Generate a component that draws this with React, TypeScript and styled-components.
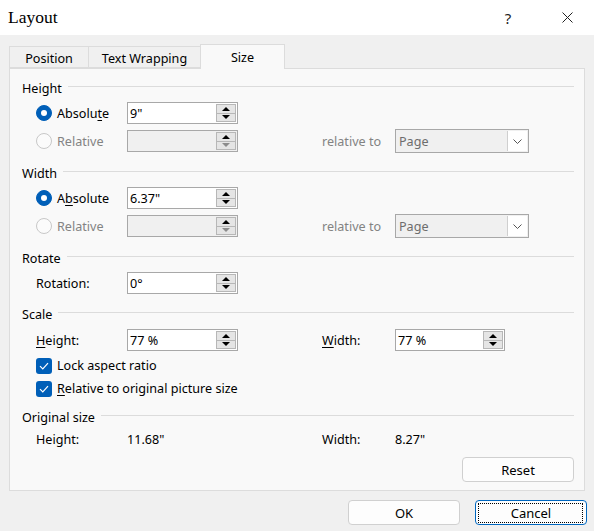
import React from "react";
import styled, { createGlobalStyle } from "styled-components";

const GlobalStyle = createGlobalStyle`
  html, body {
    margin: 0;
    padding: 0;
    background: #f0f0f0;
  }
  body {
    font-family: "Noto Sans", "Open Sans", sans-serif;
    font-size: 12.6px;
    color: #000;
  }
`;

const Window = styled.div`
  width: 594px;
  height: 531px;
  background: #f0f0f0;
  display: flex;
  flex-direction: column;
  overflow: hidden;
`;

const TitleBar = styled.div`
  height: 35px;
  flex-shrink: 0;
  background: #fff;
  display: flex;
  align-items: center;
  padding: 0 17px 0 8px;
`;

const Title = styled.div`
  flex: 1;
  font-family: "Liberation Serif", serif;
  font-size: 17.5px;
  color: #000;
`;

const TitleButton = styled.div`
  width: 20px;
  height: 20px;
  display: flex;
  align-items: center;
  justify-content: center;
  font-size: 15px;
  color: #222;
  & + & {
    margin-left: 39px;
  }
`;

const Body = styled.div`
  padding: 0 9px;
`;

const TabRow = styled.div`
  display: flex;
  align-items: flex-end;
  margin-top: 9px;
  height: 24px;
  position: relative;
  z-index: 1;
`;

const Tab = styled.div<{ $w: number; $active?: boolean }>`
  box-sizing: border-box;
  width: ${(p) => p.$w}px;
  height: ${(p) => (p.$active ? 25 : 22)}px;
  margin-bottom: ${(p) => (p.$active ? -1 : 0)}px;
  background: ${(p) => (p.$active ? "#f9f9f9" : "#f0f0f0")};
  border: 1px solid #dcdcdc;
  border-bottom: ${(p) => (p.$active ? "none" : "1px solid #dcdcdc")};
  & + & {
    margin-left: -1px;
  }
  display: flex;
  align-items: center;
  justify-content: center;
  padding-top: ${(p) => (p.$active ? 0 : 2)}px;
`;

const Panel = styled.div`
  box-sizing: border-box;
  height: 423px;
  background: #f9f9f9;
  border: 1px solid #dcdcdc;
  padding: 0 10px 0 12px;
  display: flex;
  flex-direction: column;
`;

const SectionHeader = styled.div<{ $mt: number }>`
  height: 18px;
  margin-top: ${(p) => p.$mt}px;
  display: flex;
  align-items: center;
  gap: 6px;
  &::after {
    content: "";
    flex: 1;
    height: 1px;
    margin-top: -3px;
    background: #dcdcdc;
  }
`;

const Row = styled.div<{ $mt: number; $h?: number }>`
  display: grid;
  grid-template-columns: 91px 195px 73px auto;
  align-items: center;
  height: ${(p) => p.$h ?? 24}px;
  margin-top: ${(p) => p.$mt}px;
  padding-left: 14px;
`;

const Label = styled.span<{ $disabled?: boolean }>`
  color: ${(p) => (p.$disabled ? "#838383" : "#000")};
  white-space: nowrap;
`;

const Key = styled.span`
  text-decoration: underline;
  text-underline-offset: 2px;
`;

const RadioWrap = styled.div`
  display: flex;
  align-items: center;
  gap: 5px;
`;

const RadioDot = styled.span<{ $checked?: boolean }>`
  box-sizing: border-box;
  width: 16px;
  height: 16px;
  border-radius: 50%;
  flex-shrink: 0;
  display: flex;
  align-items: center;
  justify-content: center;
  background: ${(p) => (p.$checked ? "#005fb8" : "#fbfbfb")};
  border: 1px solid ${(p) => (p.$checked ? "#005fb8" : "#c8c8c8")};
  &::after {
    content: "";
    display: ${(p) => (p.$checked ? "block" : "none")};
    width: 6px;
    height: 6px;
    border-radius: 50%;
    background: #fff;
  }
`;

const SpinBox = styled.div<{ $w: number; $disabled?: boolean }>`
  box-sizing: border-box;
  width: ${(p) => p.$w}px;
  height: 22px;
  border: 1px solid #a8a8a8;
  background: ${(p) => (p.$disabled ? "#f0f0f0" : "#fff")};
  display: flex;
`;

const SpinValue = styled.div`
  flex: 1;
  padding-left: 2px;
  display: flex;
  align-items: center;
`;

const SpinButtons = styled.div`
  width: 20px;
  padding: 1px 1px 1px 0;
  display: flex;
  flex-direction: column;
`;

const SpinButton = styled.div<{ $dim?: boolean }>`
  flex: 1;
  background: #e5e5e5;
  border: 1px solid #b7b7b7;
  display: flex;
  align-items: center;
  justify-content: center;
  color: ${(p) => (p.$dim ? "#8c8c8c" : "#000")};
  & + & {
    border-top: none;
  }
`;

const Dropdown = styled.div`
  box-sizing: border-box;
  width: 134px;
  height: 24px;
  border: 1px solid #a8a8a8;
  background: #f0f0f0;
  display: flex;
  color: #6d6d6d;
`;

const DropText = styled.div`
  flex: 1;
  padding-left: 3px;
  display: flex;
  align-items: center;
`;

const DropArrow = styled.div`
  width: 19px;
  margin: 1px 1px 1px 0;
  background: #fff;
  border-left: 1px solid #cfcfcf;
  display: flex;
  align-items: center;
  justify-content: center;
`;

const CheckRow = styled.div<{ $mt: number }>`
  height: 23px;
  margin-top: ${(p) => p.$mt}px;
  padding-left: 14px;
  display: flex;
  align-items: center;
  gap: 5px;
`;

const CheckBox = styled.span`
  width: 16px;
  height: 16px;
  border-radius: 3px;
  background: #005fb8;
  display: flex;
  align-items: center;
  justify-content: center;
`;

const Button = styled.div<{ $focused?: boolean }>`
  box-sizing: border-box;
  position: relative;
  width: 112px;
  height: 25px;
  border-radius: 4px;
  background: #fdfdfd;
  border: 1px solid ${(p) => (p.$focused ? "#0067c0" : "#d0d0d0")};
  display: flex;
  align-items: center;
  justify-content: center;
  font-size: 13px;
  &::after {
    content: "";
    display: ${(p) => (p.$focused ? "block" : "none")};
    position: absolute;
    inset: 2px 3px 1px 2px;
    border: 1px dotted #000;
  }
`;

const ResetButton = styled(Button)`
  align-self: flex-end;
  margin-top: 9px;
`;

const Footer = styled.div`
  display: flex;
  justify-content: flex-end;
  gap: 15px;
  padding-right: 7px;
  margin-top: 9px;
`;

const UpArrow = () => (
  <svg width="8" height="4" viewBox="0 0 8 4">
    <path d="M0 4 L4 0 L8 4 Z" fill="currentColor" />
  </svg>
);

const DownArrow = () => (
  <svg width="8" height="4" viewBox="0 0 8 4">
    <path d="M0 0 L8 0 L4 4 Z" fill="currentColor" />
  </svg>
);

const Spin: React.FC<{ value?: string; w?: number; disabled?: boolean }> = ({
  value = "",
  w = 111,
  disabled,
}) => (
  <SpinBox $w={w} $disabled={disabled}>
    <SpinValue>{value}</SpinValue>
    <SpinButtons>
      <SpinButton>
        <UpArrow />
      </SpinButton>
      <SpinButton $dim={disabled}>
        <DownArrow />
      </SpinButton>
    </SpinButtons>
  </SpinBox>
);

const Select: React.FC<{ value: string }> = ({ value }) => (
  <Dropdown>
    <DropText>{value}</DropText>
    <DropArrow>
      <svg width="9" height="5" viewBox="0 0 9 5">
        <path d="M0.5 0.5 L4.5 4.5 L8.5 0.5" fill="none" stroke="#555" strokeWidth="1" />
      </svg>
    </DropArrow>
  </Dropdown>
);

const Radio: React.FC<{ checked?: boolean; children: React.ReactNode }> = ({ checked, children }) => (
  <RadioWrap>
    <RadioDot $checked={checked} />
    <Label $disabled={!checked}>{children}</Label>
  </RadioWrap>
);

const Check: React.FC<{ mt: number; children: React.ReactNode }> = ({ mt, children }) => (
  <CheckRow $mt={mt}>
    <CheckBox>
      <svg width="10" height="8" viewBox="0 0 10 8">
        <path d="M1 4.2 L3.8 7 L9 1.2" fill="none" stroke="#fff" strokeWidth="1.2" />
      </svg>
    </CheckBox>
    <Label>{children}</Label>
  </CheckRow>
);

export default function App() {
  return (
    <>
      <GlobalStyle />
      <Window>
        <TitleBar>
          <Title>Layout</Title>
          <TitleButton>?</TitleButton>
          <TitleButton>
            <svg width="11" height="11" viewBox="0 0 11 11">
              <path d="M0.5 0.5 L10.5 10.5 M10.5 0.5 L0.5 10.5" stroke="#222" strokeWidth="1" />
            </svg>
          </TitleButton>
        </TitleBar>

        <Body>
          <TabRow>
            <Tab $w={80}>Position</Tab>
            <Tab $w={113}>Text Wrapping</Tab>
            <Tab $w={85} $active>
              Size
            </Tab>
          </TabRow>

          <Panel>
            <SectionHeader $mt={10}>Height</SectionHeader>
            <Row $mt={4}>
              <Radio checked>
                Absolu<Key>t</Key>e
              </Radio>
              <Spin value={'9"'} />
            </Row>
            <Row $mt={4}>
              <Radio>Relative</Radio>
              <Spin disabled />
              <Label $disabled>relative to</Label>
              <Select value="Page" />
            </Row>

            <SectionHeader $mt={11}>Width</SectionHeader>
            <Row $mt={4}>
              <Radio checked>
                A<Key>b</Key>solute
              </Radio>
              <Spin value={'6.37"'} />
            </Row>
            <Row $mt={4}>
              <Radio>Relative</Radio>
              <Spin disabled />
              <Label $disabled>relative to</Label>
              <Select value="Page" />
            </Row>

            <SectionHeader $mt={11}>Rotate</SectionHeader>
            <Row $mt={4}>
              <Label>Rotation:</Label>
              <Spin value="0°" />
            </Row>

            <SectionHeader $mt={10}>Scale</SectionHeader>
            <Row $mt={5}>
              <Label>
                <Key>H</Key>eight:
              </Label>
              <Spin value="77 %" />
              <Label>
                <Key>W</Key>idth:
              </Label>
              <Spin value="77 %" w={110} />
            </Row>
            <Check mt={2}>Lock aspect ratio</Check>
            <Check mt={0}>
              <Key>R</Key>elative to original picture size
            </Check>

            <SectionHeader $mt={8}>Original size</SectionHeader>
            <Row $mt={4} $h={18}>
              <Label>Height:</Label>
              <Label>11.68"</Label>
              <Label>Width:</Label>
              <Label>8.27"</Label>
            </Row>

            <ResetButton>Reset</ResetButton>
          </Panel>
        </Body>

        <Footer>
          <Button>OK</Button>
          <Button $focused>Cancel</Button>
        </Footer>
      </Window>
    </>
  );
}
